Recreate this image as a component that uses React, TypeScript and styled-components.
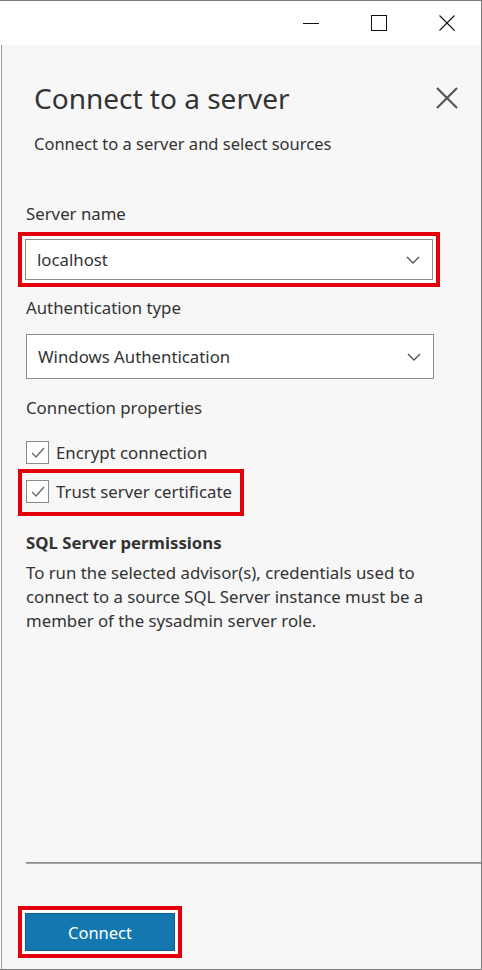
import React from "react";
import styled, { createGlobalStyle } from "styled-components";

const Global = createGlobalStyle`
  html, body { margin: 0; padding: 0; background: #ffffff; }
  body { font-family: "Noto Sans", "Open Sans", sans-serif; }
  * { box-sizing: border-box; }
`;

const Window = styled.div`
  width: 482px;
  height: 970px;
  display: flex;
  flex-direction: column;
  border-top: 1px solid #7a7a7a;
  border-right: 1px solid #7a7a7a;
  border-bottom: 1px solid #7a7a7a;
  background: #ffffff;
`;

const TitleBar = styled.div`
  height: 44px;
  flex: none;
  display: flex;
  justify-content: flex-end;
  align-items: stretch;
`;

const Ctrl = styled.div`
  width: 68px;
  display: flex;
  align-items: center;
  justify-content: center;
  color: #111;
`;

const Body = styled.div`
  flex: 1;
  display: flex;
  padding-left: 1px;
  min-height: 0;
`;

const Panel = styled.div`
  flex: 1;
  display: flex;
  flex-direction: column;
  background: #f7f7f7;
  border-left: 1px solid #9a9a9a;
  padding-left: 24px;
  color: #333;
  font-size: 17px;
`;

const Header = styled.div`
  display: flex;
  align-items: flex-start;
  justify-content: space-between;
  padding: 33px 22px 0 8px;
`;

const Heading = styled.h1`
  margin: 0;
  font-size: 28px;
  font-weight: 400;
  line-height: 40px;
  color: #333;
`;

const CloseBtn = styled.div`
  width: 24px;
  height: 24px;
  margin-top: 8px;
  display: flex;
  align-items: center;
  justify-content: center;
`;

const Subtitle = styled.p`
  margin: 14px 0 0 8px;
  font-size: 16.5px;
  line-height: 24px;
  color: #333;
`;

const Label = styled.div<{ $top: number }>`
  margin-top: ${(p) => p.$top}px;
  font-size: 16.8px;
  line-height: 24px;
  color: #333;
`;

const Highlight = styled.div<{ $fill: string; $pad: string; $top: number }>`
  align-self: flex-start;
  margin-top: ${(p) => p.$top}px;
  margin-left: -8px;
  border: 4px solid #e3000b;
  padding: ${(p) => p.$pad};
  background: ${(p) => p.$fill};
`;

const Select = styled.div<{ $h: number; $top: number }>`
  width: 408px;
  height: ${(p) => p.$h}px;
  margin-top: ${(p) => p.$top}px;
  background: #ffffff;
  border: 1px solid #8e8e8e;
  display: flex;
  align-items: center;
  justify-content: space-between;
  padding: 0 12px 0 11px;
  font-size: 16.8px;
  color: #333;
`;

const CheckList = styled.div`
  display: flex;
  flex-direction: column;
  margin-top: 20px;
  gap: 5px;
`;

const CheckRow = styled.label`
  display: flex;
  align-items: center;
  gap: 7px;
  height: 24px;
  font-size: 16.8px;
  color: #333;
`;

const Box = styled.span`
  width: 23px;
  height: 23px;
  border: 1px solid #8a8a8a;
  background: #ffffff;
  display: flex;
  align-items: center;
  justify-content: center;
`;

const Bold = styled.div`
  margin-top: 15px;
  font-size: 16.8px;
  font-weight: 700;
  line-height: 24px;
  color: #333;
`;

const Para = styled.p`
  margin: 6px 0 0;
  width: 430px;
  font-size: 16.8px;
  line-height: 24px;
  color: #333;
`;

const Spacer = styled.div`
  flex: 1;
`;

const Separator = styled.div`
  height: 2px;
  background: #a8a8a8;
  border-top: 1px solid #8c8c8c;
`;

const Footer = styled.div`
  display: flex;
  flex-direction: column;
  padding-bottom: 11px;
`;

const Button = styled.button`
  width: 150px;
  height: 38px;
  border: 1px solid #0b5f90;
  background: #1477b0;
  color: #ffffff;
  font-family: inherit;
  font-size: 16.5px;
  display: block;
  padding: 0;
`;

const Chevron = () => (
  <svg width="14" height="8" viewBox="0 0 14 8">
    <polyline points="1,1 7,7 13,1" fill="none" stroke="#555" strokeWidth="1.4" />
  </svg>
);

const Check = () => (
  <svg width="16" height="13" viewBox="0 0 16 13">
    <polyline points="2,7 6,11 14,2" fill="none" stroke="#6a6a6a" strokeWidth="1.4" />
  </svg>
);

export default function App() {
  return (
    <>
      <Global />
      <Window>
        <TitleBar>
          <Ctrl>
            <svg width="16" height="16" viewBox="0 0 16 16">
              <line x1="0" y1="8.5" x2="16" y2="8.5" stroke="#111" strokeWidth="1" />
            </svg>
          </Ctrl>
          <Ctrl>
            <svg width="16" height="16" viewBox="0 0 16 16">
              <rect x="0.5" y="0.5" width="15" height="15" fill="none" stroke="#111" strokeWidth="1" />
            </svg>
          </Ctrl>
          <Ctrl>
            <svg width="16" height="16" viewBox="0 0 16 16">
              <line x1="0.5" y1="0.5" x2="15.5" y2="15.5" stroke="#111" strokeWidth="1.1" />
              <line x1="15.5" y1="0.5" x2="0.5" y2="15.5" stroke="#111" strokeWidth="1.1" />
            </svg>
          </Ctrl>
        </TitleBar>
        <Body>
          <Panel>
            <Header>
              <Heading>Connect to a server</Heading>
              <CloseBtn>
                <svg width="22" height="22" viewBox="0 0 22 22">
                  <line x1="1" y1="1" x2="21" y2="21" stroke="#555" strokeWidth="2.2" />
                  <line x1="21" y1="1" x2="1" y2="21" stroke="#555" strokeWidth="2.2" />
                </svg>
              </CloseBtn>
            </Header>
            <Subtitle>Connect to a server and select sources</Subtitle>

            <Label $top={46}>Server name</Label>
            <Highlight $fill="#ffffff" $pad="3px" $top={6}>
              <Select $h={41} $top={0}>
                <span>localhost</span>
                <Chevron />
              </Select>
            </Highlight>

            <Label $top={9}>Authentication type</Label>
            <Select $h={45} $top={14}>
              <span>Windows Authentication</span>
              <Chevron />
            </Select>

            <Label $top={17}>Connection properties</Label>
            <CheckList>
              <CheckRow>
                <Box>
                  <Check />
                </Box>
                Encrypt connection
              </CheckRow>
              <Highlight $fill="transparent" $pad="6px 8px 9px 4px" $top={0}>
                <CheckRow>
                  <Box>
                    <Check />
                  </Box>
                  Trust server certificate
                </CheckRow>
              </Highlight>
            </CheckList>

            <Bold>SQL Server permissions</Bold>
            <Para>
              To run the selected advisor(s), credentials used to connect to a source SQL Server
              instance must be a member of the sysadmin server role.
            </Para>

            <Spacer />
            <Footer>
              <Separator />
              <Highlight $fill="#ffffff" $pad="3px" $top={42}>
                <Button>Connect</Button>
              </Highlight>
            </Footer>
          </Panel>
        </Body>
      </Window>
    </>
  );
}
